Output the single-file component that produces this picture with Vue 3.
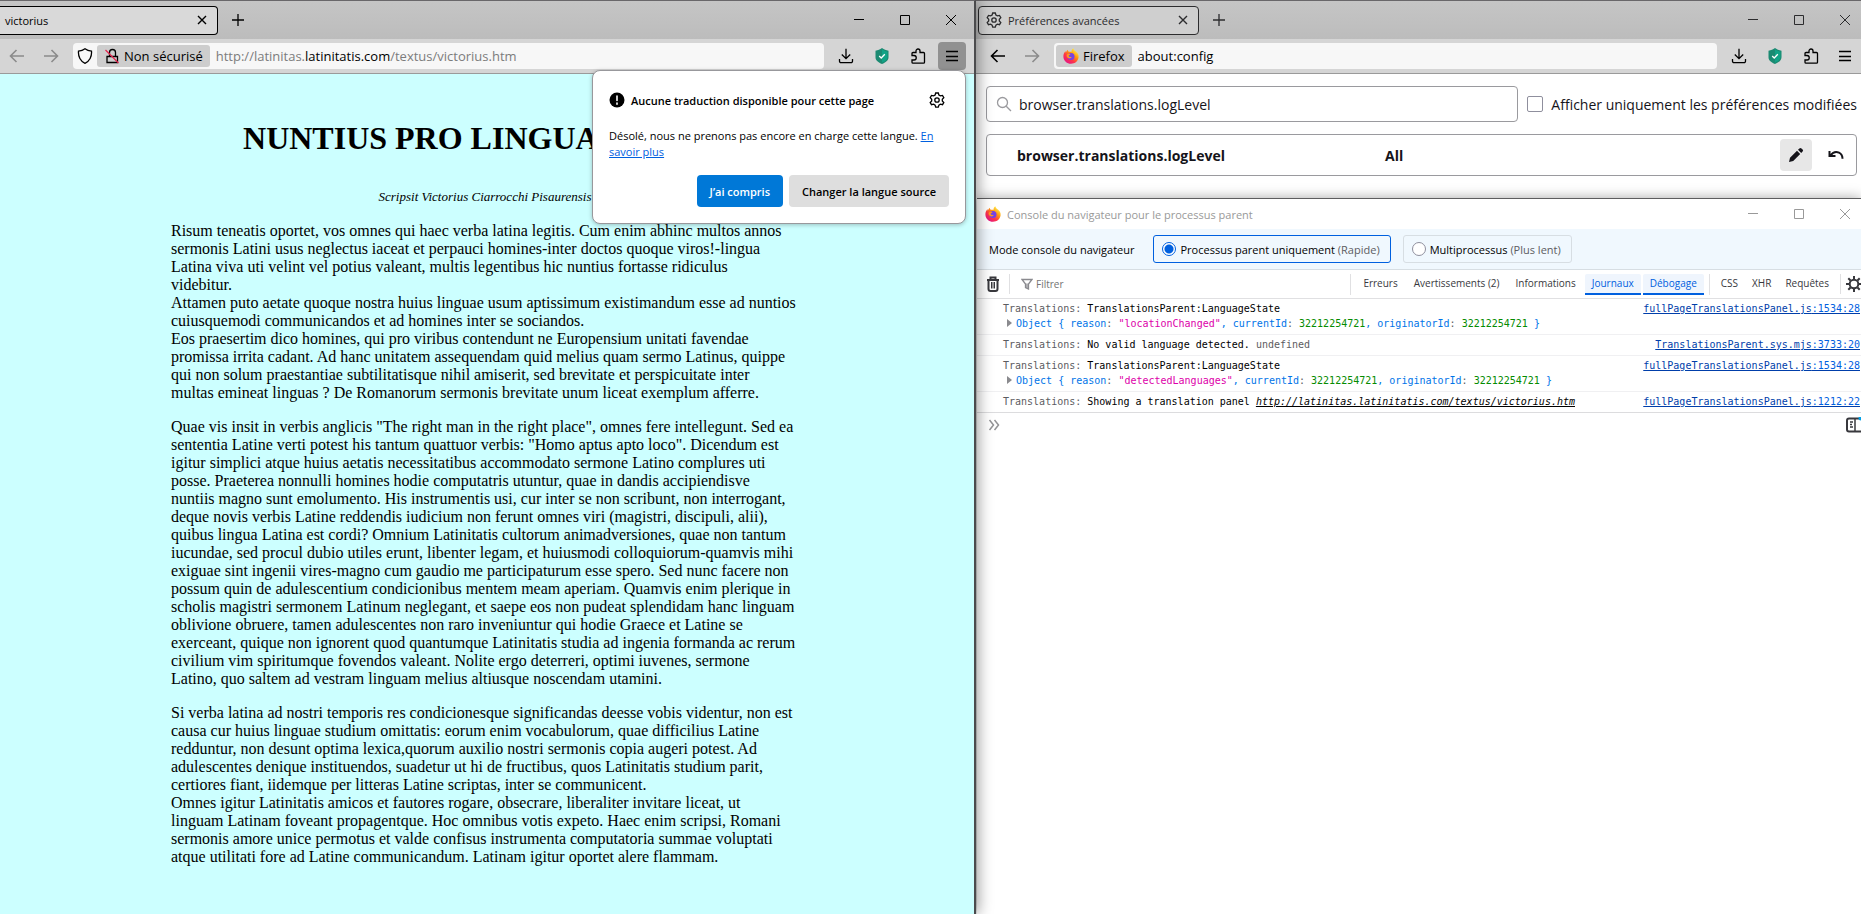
<template>
  <svg class="sprite" aria-hidden="true">
    <defs>
      <linearGradient id="fx-body" x1="0.85" y1="0.1" x2="0.2" y2="0.95">
        <stop offset="0" stop-color="#fff44f" />
        <stop offset="0.35" stop-color="#ff980e" />
        <stop offset="0.65" stop-color="#ff3647" />
        <stop offset="1" stop-color="#e31587" />
      </linearGradient>
      <symbol id="i-back" viewBox="0 0 16 16">
        <path d="M15 8H1.8M7.5 2 1.5 8l6 6" />
      </symbol>
      <symbol id="i-forward" viewBox="0 0 16 16">
        <path d="M1 8h13.2M8.5 2l6 6-6 6" />
      </symbol>
      <symbol id="i-shield" viewBox="0 0 16 16">
        <path d="M8 .8C6 2.300 3.500 3 1.500 3.200 1 8.500 3.500 13.500 8 15.300c4.500-1.800 7-6.800 6.500-12.100C12.500 3 10 2.300 8 .8z" />
      </symbol>
      <symbol id="i-lock" viewBox="0 0 16 16">
        <path d="M3 8.500v6h10.500v-6H3zM5.500 8V4.500a3 3 0 0 1 6 0V8" />
        <path d="M1.500 2l13 13" stroke="#e22850" />
      </symbol>
      <symbol id="i-download" viewBox="0 0 16 16">
        <path d="M8 .8v9.700M3.800 6.500 8 10.700l4.200-4.200M1.500 11v2.200a1.500 1.500 0 0 0 1.500 1.500h10a1.500 1.500 0 0 0 1.500-1.500V11" />
      </symbol>
      <symbol id="i-guard" viewBox="0 0 16 16">
        <path d="M8 0C6 1.500 4 2.300 1.500 2.700v6.500C1.500 12.500 4.500 14.500 8 16c3.500-1.500 6.500-3.500 6.500-6.800V2.700C12 2.300 10 1.500 8 0z" fill="#1b8a72" stroke="none" />
        <path d="M8 1.200v13.400c2.800-1.200 5.400-2.900 5.400-5.400V3.600C11.400 3.200 9.600 2.300 8 1.200z" fill="#12a386" stroke="none" />
        <path d="M5.200 8l2 2 3.600-3.800" stroke="#fff" />
      </symbol>
      <symbol id="i-puzzle" viewBox="0 0 16 16">
        <path d="M2 7V5.500A1 1 0 0 1 3 4.500h3V3a2 2 0 0 1 4 0v1.500h3.500a1 1 0 0 1 1 1v8.700a1 1 0 0 1-1 1H3a1 1 0 0 1-1-1V12h2a2 2 0 0 0 0-4.500H2z" />
      </symbol>
      <symbol id="i-menu" viewBox="0 0 16 16">
        <path d="M2 3.500h12M2 8.500h12M2 12.500h12" />
      </symbol>
      <symbol id="i-plus" viewBox="0 0 16 16">
        <path d="M8 2v12M2 8h12" />
      </symbol>
      <symbol id="i-cross" viewBox="0 0 16 16">
        <path d="M4 4l8 8M12 4l-8 8" />
      </symbol>
      <symbol id="i-min" viewBox="0 0 12 12">
        <path d="M1 5.500h10" />
      </symbol>
      <symbol id="i-max" viewBox="0 0 12 12">
        <path d="M1.500 1.500h9v9h-9z" />
      </symbol>
      <symbol id="i-close" viewBox="0 0 12 12">
        <path d="M1 1l10 10M11 1 1 11" />
      </symbol>
      <symbol id="i-gear" viewBox="0 0 16 16">
        <path d="M6.700 1h2.600l.6 2 1.500.9 2.100-.5 1.300 2.200-1.500 1.600v1.700l1.500 1.600-1.300 2.200-2.100-.5-1.500.9-.6 2H6.700l-.6-2-1.500-.9-2.100.5-1.300-2.200 1.500-1.600V7.200L1.200 5.600l1.300-2.200 2.100.5L6.100 3z" />
        <circle cx="8" cy="8" r="2.200" />
      </symbol>
      <symbol id="i-search" viewBox="0 0 16 16">
        <circle cx="6.500" cy="6.500" r="5" />
        <path d="M10.200 10.200l4.800 4.800" />
      </symbol>
      <symbol id="i-firefox" viewBox="0 0 16 16">
        <path d="M10.300.2c.4 1.700 1.500 2.400 2.600 3.400C14.700 5.200 15.900 7 15.600 9.300 15.200 13 12 15.800 8 15.800S.5 12.800.4 8.700C.3 6.500 1.200 4.500 2.500 3c0 .7.100 1.200.4 1.600.4-1.300 1-2.200 1.900-2.900 0 .9.300 1.600 1 2.100h2.800C8.400 2.200 9.100 1 10.300.2z" fill="url(#fx-body)" stroke="none" />
        <circle cx="8" cy="8.600" r="3.500" fill="#7542e5" stroke="none" />
        <path d="M3.600 7C4.400 5.600 6 5.300 7.500 6c-.1.800-1.700 1.200-1.900 1.700.3 1.300 1.700 1.500 3.100 1.100-.3 1.200-1.600 1.800-3 1.500C4.200 9.900 3.300 8.500 3.600 7z" fill="#ff9a1f" stroke="none" />
      </symbol>
    </defs>
  </svg>

  <div class="desktop">
    <section class="window page-window">
      <header class="tabbar">
        <div class="tab tab-cut">
          <span class="tab-title">victorius</span>
          <button class="tab-close" aria-label="Fermer l’onglet"><svg><use href="#i-cross" /></svg></button>
        </div>
        <button class="new-tab" aria-label="Nouvel onglet"><svg><use href="#i-plus" /></svg></button>
        <div class="controls">
          <button v-for="c in controls" :key="c.icon" :aria-label="c.label"><svg><use :href="c.icon" /></svg></button>
        </div>
      </header>
      <nav class="toolbar">
        <button class="nav-btn dim" aria-label="Page précédente"><svg><use href="#i-back" /></svg></button>
        <button class="nav-btn dim" aria-label="Page suivante"><svg><use href="#i-forward" /></svg></button>
        <div class="urlbar">
          <button class="shield" aria-label="Protection"><svg><use href="#i-shield" /></svg></button>
          <button class="chip"><svg><use href="#i-lock" /></svg>Non sécurisé</button>
          <div class="url" role="textbox" aria-label="Adresse" tabindex="0">http://latinitas.<b>latinitatis.com</b>/textus/victorius.htm</div>
        </div>
        <div class="tools">
          <button v-for="t in tools" :key="t.icon" :aria-label="t.label"><svg><use :href="t.icon" /></svg></button>
          <button class="menu active" aria-label="Menu"><svg><use href="#i-menu" /></svg></button>
        </div>
      </nav>

      <main class="page">
        <article>
          <h1>NUNTIUS PRO LINGUA LATINA</h1>
          <p class="byline">Scripsit Victorius Ciarrocchi Pisaurensis</p>
          <p v-for="(block, i) in blocks" :key="i" class="block">{{ block }}</p>
        </article>
      </main>

      <aside class="popup">
        <div class="popup-head">
          <svg class="info" viewBox="0 0 16 16">
            <circle cx="8" cy="8" r="7.500" fill="#000" />
            <path d="M8 4v4.500M8 11v1.200" stroke="#fff" stroke-width="1.600" stroke-linecap="round" />
          </svg>
          <h2>Aucune traduction disponible pour cette page</h2>
          <button class="popup-gear" aria-label="Paramètres"><svg><use href="#i-gear" /></svg></button>
        </div>
        <p>Désolé, nous ne prenons pas encore en charge cette langue. <a href="#">En savoir plus</a></p>
        <div class="popup-actions">
          <button class="primary">J’ai compris</button>
          <button>Changer la langue source</button>
        </div>
      </aside>
    </section>

    <section class="window config-window">
      <header class="tabbar inactive">
        <div class="tab">
          <svg class="favicon"><use href="#i-gear" /></svg>
          <span class="tab-title">Préférences avancées</span>
          <button class="tab-close" aria-label="Fermer l’onglet"><svg><use href="#i-cross" /></svg></button>
        </div>
        <button class="new-tab" aria-label="Nouvel onglet"><svg><use href="#i-plus" /></svg></button>
        <div class="controls">
          <button v-for="c in controls" :key="c.icon" :aria-label="c.label"><svg><use :href="c.icon" /></svg></button>
        </div>
      </header>
      <nav class="toolbar">
        <button class="nav-btn" aria-label="Page précédente"><svg><use href="#i-back" /></svg></button>
        <button class="nav-btn dim" aria-label="Page suivante"><svg><use href="#i-forward" /></svg></button>
        <div class="urlbar">
          <button class="chip"><svg><use href="#i-firefox" /></svg>Firefox</button>
          <input v-model="address" class="url dark" aria-label="Adresse">
        </div>
        <div class="tools">
          <button v-for="t in tools" :key="t.icon" :aria-label="t.label"><svg><use :href="t.icon" /></svg></button>
          <button class="menu" aria-label="Menu"><svg><use href="#i-menu" /></svg></button>
        </div>
      </nav>

      <main class="config">
        <div class="search-row">
          <div class="search">
            <svg><use href="#i-search" /></svg>
            <input v-model="query" aria-label="Rechercher une préférence">
          </div>
          <label class="only-modified"><input v-model="onlyModified" type="checkbox">Afficher uniquement les préférences modifiées</label>
        </div>
        <table class="prefs">
          <tbody>
            <tr>
              <th scope="row">browser.translations.logLevel</th>
              <td class="value">All</td>
              <td class="pref-actions">
                <button class="edit" aria-label="Modifier">
                  <svg viewBox="0 0 16 16"><path d="M1 15l1-4.200L9 3.800 12.200 7l-7 7zM10 2.800l1.400-1.400a1.500 1.500 0 0 1 2.100 0l1.100 1.100a1.500 1.500 0 0 1 0 2.100L13.200 6z" fill="#15141a" /></svg>
                </button>
                <button aria-label="Réinitialiser">
                  <svg viewBox="0 0 16 16"><path d="M1.500 4v5h6M2.500 8.500C5 5 8.500 4.500 11 5.700c2 1 3.500 2.800 3.500 6" fill="none" stroke="#15141a" stroke-width="2" /></svg>
                </button>
              </td>
            </tr>
          </tbody>
        </table>
      </main>

      <section class="console">
        <header class="console-title">
          <svg><use href="#i-firefox" /></svg>
          <span>Console du navigateur pour le processus parent</span>
          <div class="controls">
            <button v-for="c in controls" :key="c.icon" :aria-label="c.label"><svg><use :href="c.icon" /></svg></button>
          </div>
        </header>
        <div class="mode">
          <span class="mode-title">Mode console du navigateur</span>
          <label v-for="m in modes" :key="m.id" :class="{ on: mode === m.id }">
            <input v-model="mode" type="radio" name="mode" :value="m.id">
            <span>{{ m.name }} <i>({{ m.note }})</i></span>
          </label>
        </div>
        <div class="filterbar">
          <button class="trash" aria-label="Effacer la console">
            <svg viewBox="0 0 16 16"><path d="M2 4h12M5.500 3.500v-2h5v2M3.500 4v9a2 2 0 0 0 2 2h5a2 2 0 0 0 2-2V4" fill="none" stroke="#38383d" stroke-width="2" /><path d="M6.500 6v6.500M8 6v6.500M9.500 6v6.500" stroke="#38383d" stroke-width="1" /></svg>
          </button>
          <div class="filter">
            <svg viewBox="0 0 12 12"><path d="M1 1.500h10L7.500 6v5l-3-1.500V6z" fill="none" stroke="#8a8a8f" /><path d="M6 5.500V10" stroke="#8a8a8f" /></svg>
            <input v-model="filter" placeholder="Filtrer" aria-label="Filtrer">
          </div>
          <div class="levels">
            <button v-for="l in levels" :key="l" :class="{ on: active.includes(l) }">{{ l }}</button>
          </div>
          <div class="kinds">
            <button v-for="k in kinds" :key="k">{{ k }}</button>
          </div>
          <button class="settings" aria-label="Paramètres de la console">
            <svg viewBox="0 0 16 16"><circle cx="8" cy="8" r="4.300" fill="none" stroke="#38383d" stroke-width="2" /><path d="M8 0v3M8 13v3M0 8h3M13 8h3M2.300 2.300l2.200 2.200M11.500 11.500l2.200 2.200M13.700 2.300l-2.200 2.200M4.500 11.500l-2.200 2.200" stroke="#38383d" stroke-width="2" /></svg>
          </button>
        </div>
        <ul class="log">
          <li v-for="(m, i) in messages" :key="i">
            <div class="log-text">
              <span class="muted">Translations:</span>{{ ' ' + m.text + ' ' }}<span v-if="m.extra" class="muted">{{ m.extra }}</span>
              <a v-if="m.url" :href="m.url" class="log-url">{{ m.url }}</a>
              <div v-if="m.reason" class="object"><span class="arrow"></span>Object { reason<s>:</s> <em>"{{ m.reason }}"</em>, currentId<s>:</s> <b>32212254721</b>, originatorId<s>:</s> <b>32212254721</b> }</div>
            </div>
            <a href="#" class="source">{{ m.file }}<span>:{{ m.line }}</span></a>
          </li>
        </ul>
        <div class="prompt">
          <svg viewBox="0 0 12 12"><path d="M1.500 1l4 5-4 5M6.500 1l4 5-4 5" fill="none" stroke="#939395" stroke-width="1.500" /></svg>
          <button class="split" aria-label="Éditeur">
            <svg viewBox="0 0 15 16"><rect x="1" y="1.500" width="18" height="13" rx="2" fill="none" stroke="#38383d" stroke-width="2" /><path d="M9 2v12" stroke="#38383d" stroke-width="1.500" /><path d="M4 5h3M4 7.500h2M4 10h3" stroke="#38383d" /><circle cx="15" cy="1" r="2.500" fill="#00a0e8" /></svg>
          </button>
        </div>
      </section>
    </section>
  </div>
</template>

<script setup>
import { ref } from 'vue';

const address = ref('about:config');
const query = ref('browser.translations.logLevel');
const onlyModified = ref(false);
const mode = ref('parent');
const filter = ref('');
const active = ref(['Journaux', 'Débogage']);

const controls = [
  { icon: '#i-min', label: 'Réduire' },
  { icon: '#i-max', label: 'Agrandir' },
  { icon: '#i-close', label: 'Fermer' }
];

const tools = [
  { icon: '#i-download', label: 'Téléchargements' },
  { icon: '#i-guard', label: 'Protection web' },
  { icon: '#i-puzzle', label: 'Extensions' }
];

const modes = [
  { id: 'parent', name: 'Processus parent uniquement', note: 'Rapide' },
  { id: 'multi', name: 'Multiprocessus', note: 'Plus lent' }
];

const levels = ['Erreurs', 'Avertissements (2)', 'Informations', 'Journaux', 'Débogage'];
const kinds = ['CSS', 'XHR', 'Requêtes'];

const messages = [
  { text: 'TranslationsParent:LanguageState', reason: 'locationChanged', file: 'fullPageTranslationsPanel.js', line: '1534:28' },
  { text: 'No valid language detected.', extra: 'undefined', file: 'TranslationsParent.sys.mjs', line: '3733:20' },
  { text: 'TranslationsParent:LanguageState', reason: 'detectedLanguages', file: 'fullPageTranslationsPanel.js', line: '1534:28' },
  { text: 'Showing a translation panel', url: 'http://latinitas.latinitatis.com/textus/victorius.htm', file: 'fullPageTranslationsPanel.js', line: '1212:22' }
];

// newlines are kept by white-space: pre-line
const blocks = [
  `Risum teneatis oportet, vos omnes qui haec verba latina legitis. Cum enim abhinc multos annos
sermonis Latini usus neglectus iaceat et perpauci homines-inter doctos quoque viros!-lingua
Latina viva uti velint vel potius valeant, multis legentibus hic nuntius fortasse ridiculus
videbitur.
Attamen puto aetate quoque nostra huius linguae usum aptissimum existimandum esse ad nuntios
cuiusquemodi communicandos et ad homines inter se sociandos.
Eos praesertim dico homines, qui pro viribus contendunt ne Europensium unitati favendae
promissa irrita cadant. Ad hanc unitatem assequendam quid melius quam sermo Latinus, quippe
qui non solum praestantiae subtilitatisque nihil amiserit, sed brevitate et perspicuitate inter
multas emineat linguas ? De Romanorum sermonis brevitate unum liceat exemplum afferre.`,
  `Quae vis insit in verbis anglicis "The right man in the right place", omnes fere intellegunt. Sed ea
sententia Latine verti potest his tantum quattuor verbis: "Homo aptus apto loco". Dicendum est
igitur simplici atque huius aetatis necessitatibus accommodato sermone Latino complures uti
posse. Praeterea nonnulli homines hodie computatris utuntur, quae in dandis accipiendisve
nuntiis magno sunt emolumento. His instrumentis usi, cur inter se non scribunt, non interrogant,
deque novis verbis Latine reddendis iudicium non ferunt omnes viri (magistri, discipuli, alii),
quibus lingua Latina est cordi? Omnium Latinitatis cultorum animadversiones, quae non tantum
iucundae, sed procul dubio utiles erunt, libenter legam, et huiusmodi colloquiorum-quamvis mihi
exiguae sint ingenii vires-magno cum gaudio me participaturum esse spero. Sed nunc facere non
possum quin de adulescentium condicionibus mentem meam aperiam. Quamvis enim plerique in
scholis magistri sermonem Latinum neglegant, et saepe eos non pudeat splendidam hanc linguam
oblivione obruere, tamen adulescentes non raro inveniuntur qui hodie Graece et Latine se
exerceant, quique non ignorent quod quantumque Latinitatis studia ad ingenia formanda ac rerum
civilium vim spiritumque fovendos valeant. Nolite ergo deterreri, optimi iuvenes, sermone
Latino, quo saltem ad vestram linguam melius altiusque noscendam utamini.`,
  `Si verba latina ad nostri temporis res condicionesque significandas deesse vobis videntur, non est
causa cur huius linguae studium omittatis: eorum enim vocabulorum, quae difficilius Latine
redduntur, non desunt optima lexica,quorum auxilio nostri sermonis copia augeri potest. Ad
adulescentes denique instituendos, suadetur ut hi de fructibus, quos Latinitatis studium parit,
certiores fiant, iidemque per litteras Latine scriptas, inter se communicent.
Omnes igitur Latinitatis amicos et fautores rogare, obsecrare, liberaliter invitare liceat, ut
linguam Latinam foveant propagentque. Hoc omnibus votis expeto. Haec enim scripsi, Romani
sermonis amore unice permotus et valde confisus instrumenta computatoria summae voluptati
atque utilitati fore ad Latine communicandum. Latinam igitur oportet alere flammam.`
];
</script>

<style>
body {
  overflow: hidden;
}
</style>

<style scoped>
.sprite {
  position: absolute;
  width: 0;
  height: 0;
}

.desktop {
  display: grid;
  grid-template-columns: 976fr 885fr;
  min-height: 100vh;
  font-family: 'Open Sans', 'Noto Sans', sans-serif;
  font-size: 11px;
  color: #000;
}

.desktop * {
  box-sizing: border-box;
}

button {
  display: flex;
  align-items: center;
  justify-content: center;
  padding: 0;
  border: 0;
  background: none;
  font: inherit;
  color: inherit;
}

input {
  min-width: 0;
  margin: 0;
  padding: 0;
  border: 0;
  outline: 0;
  background: none;
  font: inherit;
  color: inherit;
}

svg {
  flex: none;
  width: 16px;
  height: 16px;
  fill: none;
  stroke: currentColor;
  stroke-width: 1.3;
}

path[fill]:not([stroke]),
circle[fill]:not([stroke]) {
  stroke: none;
}

.window {
  position: relative;
  display: flex;
  flex-direction: column;
  min-width: 0;
  border-top: 1px solid #69676a;
  background: #fff;
}

.page-window {
  z-index: 2;
  border-right: 2px solid #4b4b4d;
  box-shadow: 2px 0 14px rgba(0, 0, 0, 0.4);
}

.tabbar {
  display: flex;
  align-items: center;
  height: 38px;
  background: linear-gradient(#c5c5c5, #bcbcbc);
}

.inactive {
  padding-left: 2px;
  color: #2c2c2e;
}

.tab {
  display: flex;
  align-items: center;
  width: 221px;
  height: 29px;
  padding: 0 7px;
  border: 1px solid currentColor;
  border-radius: 4px;
  background: #d9d9d9;
}

.inactive .tab {
  background: #cfcfcf;
}

.tab-cut {
  width: 218px;
  padding-left: 5px;
  border-left: 0;
  border-radius: 0 4px 4px 0;
}

.favicon {
  margin-right: 6px;
}

.tab-title {
  flex: 1;
}

.tab-close svg {
  stroke-width: 1.4;
}

.new-tab {
  width: 40px;
  height: 30px;
}

.controls {
  display: flex;
  margin-left: auto;
}

.controls button {
  width: 46px;
  height: 30px;
}

.controls svg {
  width: 12px;
  height: 12px;
  stroke-width: 1;
}

.config-window .controls {
  margin-right: -7px;
}

.toolbar {
  display: flex;
  align-items: center;
  height: 35px;
  border-bottom: 1px solid #9a9a9a;
  background: #d5d5d5;
}

.nav-btn {
  width: 34px;
  height: 30px;
}

.nav-btn svg {
  stroke-width: 1.6;
}

.config-window .nav-btn:first-child {
  margin-left: 5px;
}

.dim {
  color: #8b8b8b;
}

.urlbar {
  display: flex;
  flex: 1;
  align-items: center;
  gap: 2px;
  height: 26px;
  margin-left: 5px;
  padding: 0 2px;
  border-radius: 4px;
  background: #f7f7f7;
  font-size: 13px;
}

.shield {
  width: 20px;
}

.chip {
  gap: 4px;
  height: 22px;
  padding: 0 7px;
  border-radius: 3px;
  background: #cdcdcd;
}

.url {
  flex: 1;
  padding-left: 4px;
  color: #7c7c7c;
}

.url b {
  font-weight: 400;
  color: #000;
}

.dark {
  color: #000;
}

.tools {
  display: flex;
  margin-left: 4px;
  margin-right: 8px;
}

.config-window .tools {
  margin-right: 2px;
}

.tools button {
  width: 36px;
  height: 28px;
}

.tools .menu {
  width: 28px;
  margin-left: 2px;
  border-radius: 4px;
}

.tools .active {
  background: #919191;
}

/* article */
.page {
  flex: 1;
  padding-right: 4px;
  background: #ccffff;
  font-family: 'Liberation Serif', serif;
  font-size: 16px;
  line-height: 18px;
}

article {
  width: 628px;
  margin: 0 auto;
}

article h1 {
  margin: 46px 0 32px;
  font-size: 32px;
  line-height: 36px;
  text-align: center;
  white-space: nowrap;
}

article p {
  margin: 0 0 16px;
}

article .block {
  white-space: pre-line;
}

article .byline {
  font-size: 13px;
  font-style: italic;
  text-align: center;
}

/* translation popup */
.popup {
  position: absolute;
  top: 69px;
  right: 8px;
  width: 374px;
  padding: 19px 16px 16px;
  border: 1px solid #98989c;
  border-radius: 8px;
  background: #fff;
  box-shadow: 0 1px 4px rgba(0, 0, 0, 0.25);
}

.popup-head {
  display: flex;
  align-items: center;
  gap: 6px;
  height: 20px;
}

.popup h2 {
  flex: 1;
  margin: 0;
  font-size: 11px;
  font-weight: 600;
}

.popup .info {
  stroke: none;
}

.popup-gear {
  margin-right: 4px;
}

.popup p {
  margin: 18px 0 15px;
  line-height: 16px;
}

.popup a {
  color: #0060df;
}

.popup-actions {
  display: flex;
  justify-content: flex-end;
  gap: 6px;
}

.popup-actions button {
  height: 32px;
  padding: 0 13px;
  border-radius: 4px;
  background: #dedede;
  font-weight: 600;
}

.popup-actions .primary {
  background: #0078d7;
  color: #fff;
}

/* about:config */
.config {
  padding: 12px 4px 22px 10px;
  color: #15141a;
  font-size: 14px;
}

.search-row {
  display: flex;
  align-items: center;
  gap: 9px;
}

.search {
  display: flex;
  flex: 1;
  align-items: center;
  gap: 7px;
  height: 36px;
  padding: 0 9px;
  border: 1px solid #9a9a9e;
  border-radius: 4px;
}

.search svg {
  color: #9a9a9e;
}

.search input {
  flex: 1;
}

.only-modified {
  display: flex;
  align-items: center;
  gap: 8px;
  white-space: nowrap;
}

.only-modified input {
  appearance: none;
  width: 16px;
  height: 16px;
  border: 1px solid #8f8f9d;
  border-radius: 2px;
}

.prefs {
  width: 100%;
  height: 42px;
  margin-top: 12px;
  border: 1px solid #9a9a9e;
  border-radius: 4px;
  border-spacing: 0;
  font-weight: 700;
}

.prefs th,
.prefs td {
  padding: 0;
  text-align: left;
}

.prefs th {
  width: 398px;
  padding-left: 30px;
}

.pref-actions button {
  width: 32px;
  height: 32px;
  border-radius: 4px;
}

.prefs .pref-actions {
  display: flex;
  justify-content: flex-end;
  gap: 8px;
  padding: 4px;
}

.edit {
  background: #e7e7e7;
}

/* browser console */
.console {
  display: flex;
  flex: 1;
  flex-direction: column;
  margin-left: 1px;
  border-top: 1px solid #5d5d5f;
  background: #fff;
  box-shadow: 0 0 12px rgba(0, 0, 0, 0.35);
}

.console-title {
  display: flex;
  align-items: center;
  gap: 6px;
  height: 30px;
  padding-left: 8px;
  color: #999;
}

.mode {
  display: flex;
  align-items: center;
  gap: 12px;
  height: 41px;
  padding-left: 12px;
  border-bottom: 1px solid #d7dee3;
  background: #f0f8fe;
}

.mode-title {
  margin-right: 7px;
}

.mode label {
  display: flex;
  align-items: center;
  gap: 4px;
  height: 28px;
  padding: 0 10px 0 8px;
  border: 1px solid #d7dee3;
  border-radius: 3px;
}

.mode .on {
  border-color: #0060df;
}

.mode input {
  appearance: none;
  width: 14px;
  height: 14px;
  border: 1px solid #8f8f9d;
  border-radius: 50%;
  background: #fff;
}

.mode input:checked {
  border-color: #0060df;
  background: radial-gradient(circle, #0060df 4px, #fff 5px);
}

.mode i {
  color: #5c5c61;
  font-style: normal;
}

.filterbar {
  display: flex;
  align-items: center;
  height: 29px;
  border-bottom: 1px solid #e0e0e2;
  color: #38383d;
  font-size: 10px;
}

.trash {
  width: 33px;
  height: 20px;
  border-right: 1px solid #e0e0e2;
}

.filter {
  display: flex;
  flex: 1;
  align-items: center;
  gap: 3px;
  padding-left: 11px;
}

.filter svg {
  width: 12px;
  height: 12px;
}

.filter input {
  flex: 1;
}

.filter input::placeholder {
  color: #737373;
}

.levels,
.kinds {
  display: flex;
  gap: 2px;
  padding: 0 5px;
  border-left: 1px solid #e0e0e2;
}

.levels button,
.kinds button {
  height: 21px;
  padding: 0 6px;
  border-bottom: 2px solid transparent;
}

.levels button {
  padding: 0 7px;
}

.levels .on {
  border-color: #0060df;
  border-radius: 2px 2px 0 0;
  background: #eff5fd;
  color: #0060df;
}

.settings {
  width: 21px;
  height: 20px;
  padding-left: 6px;
  border-left: 1px solid #e0e0e2;
}

.log {
  margin: 0;
  padding: 0;
  list-style: none;
  font-family: 'DejaVu Sans Mono', monospace;
  font-size: 10px;
  line-height: 14px;
}

.log li {
  display: flex;
  justify-content: space-between;
  padding: 3px 1px 3px 26px;
  border-bottom: 1px solid #f0f0f2;
}

.log li:last-child {
  border-color: #dcdcde;
}

.muted {
  color: #5c5c61;
}

.log-url {
  color: #000;
  font-style: italic;
}

.object {
  padding-left: 4px;
  line-height: 15px;
  color: #0074e8;
}

.arrow {
  display: inline-block;
  width: 5px;
  height: 8px;
  margin-right: 4px;
  background: #8a8a8e;
  clip-path: polygon(0 0, 100% 50%, 0 100%);
}

.object s {
  color: #5c5c61;
  text-decoration: none;
}

.object em {
  color: #dd00a9;
  font-style: normal;
}

.object b {
  color: #058b00;
  font-weight: 400;
}

.source {
  color: #003eaa;
}

.source span {
  color: #0060df;
}

.prompt {
  display: flex;
  align-items: center;
  justify-content: space-between;
  height: 24px;
  padding-left: 11px;
}

.prompt > svg {
  width: 12px;
  height: 12px;
}

.split svg {
  width: 15px;
}
</style>
